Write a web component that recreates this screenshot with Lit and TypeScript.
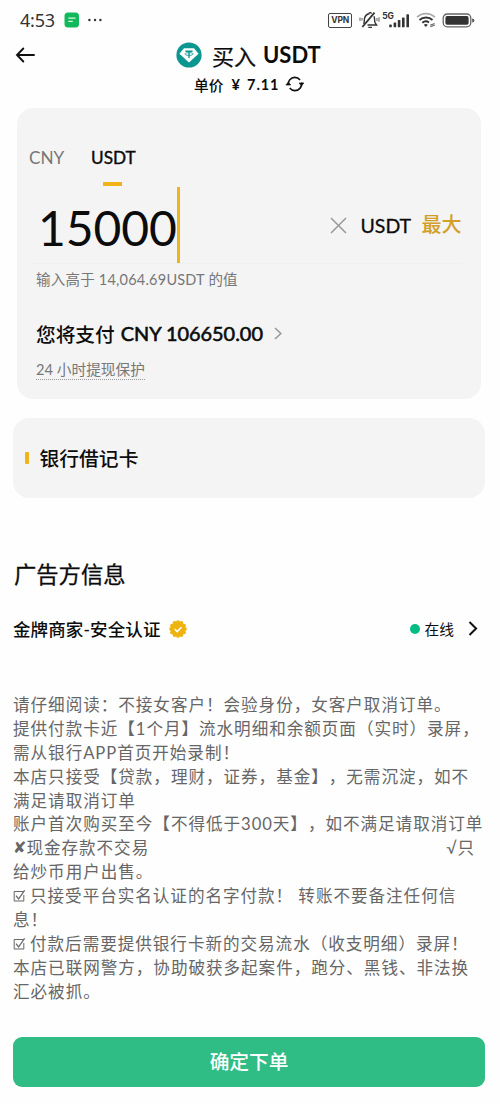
import { LitElement, html, css, svg } from "lit";
import { customElement } from "lit/decorators.js";

const TERMS = [
  "请仔细阅读：不接女客户！会验身份，女客户取消订单。",
  "提供付款卡近【1个月】流水明细和余额页面（实时）录屏，",
  "需从银行APP首页开始录制！",
  "本店只接受【贷款，理财，证券，基金】，无需沉淀，如不",
  "满足请取消订单",
  "账户首次购买至今【不得低于300天】，如不满足请取消订单",
];
const CLOSING = ["本店已联网警方，协助破获多起案件，跑分、黑钱、非法换", "汇必被抓。"];

const checkbox = html`<svg class="box" width="13" height="14" viewBox="0 0 13 14" fill="none" stroke="#666" stroke-width="1">
  <path d="M10 2.5H1.2V12h9.6V6" /><path d="M3 6.6l2.6 3.4L11.6 1.4" stroke-width="1.3" />
</svg>`;

@customElement("status-bar")
class StatusBar extends LitElement {
  static styles = css`
    :host { display: flex; height: 40px; box-sizing: border-box; padding: 0 25px 0 20px; align-items: center; justify-content: space-between; color: #333; font-family: Lato, sans-serif; }
    .side { display: flex; align-items: center; }
    .time { font: 18px/20px "Noto Sans", sans-serif; letter-spacing: -0.2px; width: 44px; white-space: nowrap; }
    .dots { margin-left: 8px; }
    .vpn { box-sizing: border-box; width: 24px; height: 15px; border: 1.5px solid #444; border-radius: 2px; font: 700 8.5px/12px Inter, sans-serif; text-align: center; letter-spacing: -0.1px; }
    .bell { margin-left: 7px; }
    .net { font: 700 8.5px/8px Inter, sans-serif; margin: -9px 0 0 2px; }
    .bars { margin-left: -5px; }
    .wifi { margin-left: 6px; }
    .battery { margin-left: 6px; }
  `;
  render() {
    return html`
      <div class="side">
        <span class="time">4:53</span>
        <svg width="16" height="16" viewBox="0 0 16 16"><rect x="0.5" y="0.5" width="14.5" height="15" rx="3.5" fill="#10b95c" /><path d="M4.3 6.2h7.2M4.3 9.4h4.5" stroke="#d8f5e4" stroke-width="1.2" /></svg>
        <svg class="dots" width="14" height="4" viewBox="0 0 14 4" fill="#333"><circle cx="1.4" cy="2" r="1.2" /><circle cx="7" cy="2" r="1.2" /><circle cx="12.4" cy="2" r="1.2" /></svg>
      </div>
      <div class="side">
        <span class="vpn">VPN</span>
        <svg class="bell" width="21" height="18" viewBox="0 0 21 18" fill="none" stroke="#333" stroke-width="1.4">
          <path d="M4.6 12.8C5.8 11 5 9 5.6 7 6.4 4.4 8 3.2 9.8 2.8 10 1.2 12 1.2 12.4 2.6M15 5.2C16 7.5 15.2 10 16.2 11.8L17.6 14H8.5M9.3 16.4H13" />
          <path d="M15.5 1.6L3.4 16" stroke-width="1.8" />
          <path d="M1 6.5v3.6M3 7v2.4M18 7v3M20 6.2v4.6" stroke="#777" stroke-width="1.2" />
        </svg>
        <span class="net">5G</span>
        <svg class="bars" width="21" height="15" viewBox="0 0 21 15" fill="#333"><rect x="0.2" y="11.5" width="2.6" height="2.8" rx="0.6" /><rect x="4.6" y="9.5" width="2.6" height="4.8" rx="0.6" /><rect x="8.8" y="7" width="2.6" height="7.3" rx="0.6" /><rect x="13" y="4.5" width="2.6" height="9.8" rx="0.6" /><rect x="17.4" y="1.3" width="2.6" height="13" rx="0.6" /></svg>
        <svg class="wifi" width="20" height="16" viewBox="0 0 20 16" fill="none">
          <path d="M1 5.2C6 .4 14 .4 19 5.2" stroke="#aaa" stroke-width="1.6" /><path d="M3.5 8C7 4.7 13 4.7 16.5 8" stroke="#333" stroke-width="1.9" /><path d="M6.3 10.8C8.4 9 11.2 9 13 10.4" stroke="#333" stroke-width="1.9" /><path d="M7.8 12.8q2-1.4 4 0L9.8 15z" fill="#333" /><path d="M14.2 13.2l4.4-1.8M14.4 14.8l4.4-1.8" stroke="#666" stroke-width="1.1" />
        </svg>
        <svg class="battery" width="33" height="15" viewBox="0 0 33 15"><rect x="1.2" y="1" width="27.6" height="12.8" rx="4" fill="none" stroke="#666" stroke-width="1.3" /><rect x="3.4" y="3.1" width="23.2" height="8.6" rx="1.8" fill="#333" /><path d="M30.2 5.4q2.2.2 2.2 2t-2.2 2z" fill="#555" /></svg>
      </div>
    `;
  }
}

const badgeTeeth = Array.from({ length: 12 }, (_, i) => {
  const a = (i * Math.PI) / 6;
  return svg`<circle cx=${9 + 6.9 * Math.cos(a)} cy=${9 + 6.9 * Math.sin(a)} r="1.9" />`;
});

@customElement("app-root")
class AppRoot extends LitElement {
  static styles = css`
    :host { display: block; width: 500px; height: 1104px; overflow: hidden; background: #fefefe; color: #0c0c0c; font-family: Lato, "Noto Sans CJK SC", sans-serif; white-space: nowrap; text-spacing-trim: space-all; }
    svg { display: block; flex: none; }
    .row { display: flex; align-items: center; }
    .header { display: grid; grid-template-columns: 176px auto; height: 30px; align-items: center; }
    .back { margin-left: 15px; }
    .title { display: flex; align-items: center; }
    .title-cn { font: 400 22px/30px "Noto Sans CJK SC", sans-serif; margin-left: 10px; -webkit-text-stroke: 0.25px #0c0c0c; }
    .title-en { font: 700 22px/30px Lato, sans-serif; margin-left: 7px; }
    .price { height: 28px; padding-left: 194px; font-size: 14.7px; font-weight: 500; }
    .num { font-weight: 700; margin: 0 6px 0 8px; letter-spacing: 0.9px; word-spacing: 2px; font-size: 14.5px; }
    .amount-card { margin: 10px 19px 0 17px; height: 291px; box-sizing: border-box; border-radius: 16px; background: #f4f4f4; padding: 37px 19px 0 12px; }
    .tabs { height: 24px; font-size: 17.2px; }
    .tab { color: #777; width: 62px; }
    .tab-on { -webkit-text-stroke: 0.4px #0c0c0c; }
    .mark { width: 19px; height: 4px; background: #f0b418; margin: 13px 0 0 74px; }
    .entry { height: 76px; margin-top: 1px; }
    .value { font-size: 48px; line-height: 76px; letter-spacing: -0.1px; margin-left: 9px; width: 139px; margin-top: 5px; }
    .caret { width: 2.5px; height: 76px; background: #f0b418; }
    .clear { margin-left: 150px; }
    .unit { font-size: 19.5px; margin-left: 14px; width: 61px; -webkit-text-stroke: 0.3px #0c0c0c; }
    .max { font-size: 20px; line-height: 26px; margin-top: -2px; font-weight: 500; color: #d2a02a; }
    .hint { border-top: 1px solid #f0f0f2; height: 29px; padding-left: 7px; color: #777; font-size: 14.5px; letter-spacing: 0.22px; }
    .pay { height: 28px; margin-top: 26px; padding-left: 7px; font-size: 19.7px; font-weight: 500; }
    .pay-en { margin: 0 11px 0 6px; font-weight: 400; font-size: 19.9px; -webkit-text-stroke: 0.6px #0c0c0c; }
    .guard { display: inline-block; margin: 12px 0 0 7px; font-size: 14.7px; line-height: 20px; color: #777; border-bottom: 1px dotted #999; }
    .bank-card { margin: 19px 15px 0 13px; height: 80px; box-sizing: border-box; padding-bottom: 2px; border-radius: 16px; background: #f4f4f4; font-size: 19.8px; font-weight: 500; }
    .tick { width: 3.5px; height: 12px; border-radius: 1px; background: #f0b418; margin: 2px 11px 0 12px; }
    .heading { margin: 61px 0 0 14px; height: 32px; font-size: 22.3px; line-height: 32px; -webkit-text-stroke: 0.3px #0c0c0c; }
    .merchant { margin: 23px 22px 0 13px; height: 28px; font-size: 17.5px; font-weight: 500; letter-spacing: 0.12px; }
    .badge { margin: 2px 0 0 8px; }
    .online { margin-left: auto; font-size: 14.7px; font-weight: 400; letter-spacing: 0; }
    .dot { width: 10px; height: 10px; border-radius: 50%; background: #05bd83; margin: 1px 5px 0 0; }
    .go { margin: 1px 0 0 14px; }
    .terms { margin: 51px 0 0 13px; width: 470px; font-size: 16.6px; line-height: 24px; letter-spacing: 0.95px; color: #666; }
    .line { display: flex; align-items: center; height: 23.92px; }
    .cross { font: 16px/24px "DejaVu Sans", sans-serif; letter-spacing: 0; }
    .yes { margin-left: auto; padding-right: 8px; }
    .box { margin-right: 4px; }
    .submit { display: flex; align-items: center; justify-content: center; box-sizing: border-box; width: 472px; height: 50px; margin: 33px 0 0 13px; padding: 0 0 1px; border: 0; border-radius: 9px; background: #2fbd85; color: #fff; font: 500 19.7px/48px "Noto Sans CJK SC", sans-serif; }
  `;
  render() {
    return html`
      <status-bar></status-bar>
      <div class="header">
        <svg class="back" width="20" height="16" viewBox="0 0 20 16" fill="none" stroke="#111" stroke-width="1.9" stroke-linecap="round"><path d="M19 8H2M8.3 1.5L2 8l6.3 6.5" /></svg>
        <div class="title">
          <svg width="26" height="26" viewBox="0 0 26 26"><circle cx="13" cy="13" r="12.6" fill="#0b9690" /><path d="M8 6.2h10l4.6 5.6L13 20.5 3.4 11.8z" fill="#fff" /><path d="M9.4 9.2h7.2M13 9v7" fill="none" stroke="#0b9690" stroke-width="1.4" /><ellipse cx="13" cy="12" rx="4.2" ry="1.4" fill="none" stroke="#0b9690" stroke-width=".8" /></svg>
          <span class="title-cn">买入</span><span class="title-en">USDT</span>
        </div>
      </div>
      <div class="row price">
        <span>单价</span><span class="num">¥ 7.11</span>
        <svg width="20" height="16" viewBox="0 0 20 16" fill="none" stroke="#111" stroke-width="1.6"><path d="M3.2 9.2C2.6 5 5.8 1.4 9.8 1.4c2.2 0 4 .9 5.2 2.5M16.6 6.5c.8 4.2-2.4 8.1-6.7 8.1-2.2 0-4-.9-5.2-2.5" /><path d="M.8 9h5L3.3 6.2zM14 7h5L16.4 9.8z" fill="#111" stroke-width=".6" /></svg>
      </div>
      <section class="amount-card">
        <div class="row tabs"><span class="tab">CNY</span><span class="tab-on">USDT</span></div>
        <div class="mark"></div>
        <div class="row entry">
          <span class="value">15000</span><span class="caret"></span>
          <svg class="clear" width="17" height="17" viewBox="0 0 17 17" stroke="#999" stroke-width="1.5"><path d="M1 1l15 15M16 1L1 16" /></svg>
          <span class="unit">USDT</span><span class="max">最大</span>
        </div>
        <div class="row hint">输入高于 14,064.69USDT 的值</div>
        <div class="row pay"><span>您将支付</span><span class="pay-en">CNY 106650.00</span>
          <svg width="8" height="13" viewBox="0 0 8 13" fill="none" stroke="#999" stroke-width="1.6"><path d="M1 1l5.8 5.5L1 12" /></svg>
        </div>
        <span class="guard">24 小时提现保护</span>
      </section>
      <section class="row bank-card"><span class="tick"></span><span>银行借记卡</span></section>
      <div class="heading">广告方信息</div>
      <div class="row merchant">
        <span>金牌商家-安全认证</span>
        <svg class="badge" width="18" height="18" viewBox="0 0 18 18" fill="#eeb30f"><circle cx="9" cy="9" r="7.4" />${badgeTeeth}<path d="M5.8 9.2l2.4 2.3 4.2-4.3" fill="none" stroke="#fff" stroke-width="1.6" /></svg>
        <div class="row online"><span class="dot"></span><span>在线</span>
          <svg class="go" width="10" height="15" viewBox="0 0 10 15" fill="none" stroke="#111" stroke-width="2"><path d="M1.5 1l6.6 6.5L1.5 14" /></svg>
        </div>
      </div>
      <div class="terms">
        ${TERMS.map((t) => html`<div class="line">${t}</div>`)}
        <div class="line"><span class="cross">✘</span><span>现金存款不交易</span><span class="yes">√只</span></div>
        <div class="line">给炒币用户出售。</div>
        <div class="line">${checkbox}<span>只接受平台实名认证的名字付款！ 转账不要备注任何信</span></div>
        <div class="line">息！</div>
        <div class="line">${checkbox}<span>付款后需要提供银行卡新的交易流水（收支明细）录屏！</span></div>
        ${CLOSING.map((t) => html`<div class="line">${t}</div>`)}
      </div>
      <button class="submit">确定下单</button>
    `;
  }
}
